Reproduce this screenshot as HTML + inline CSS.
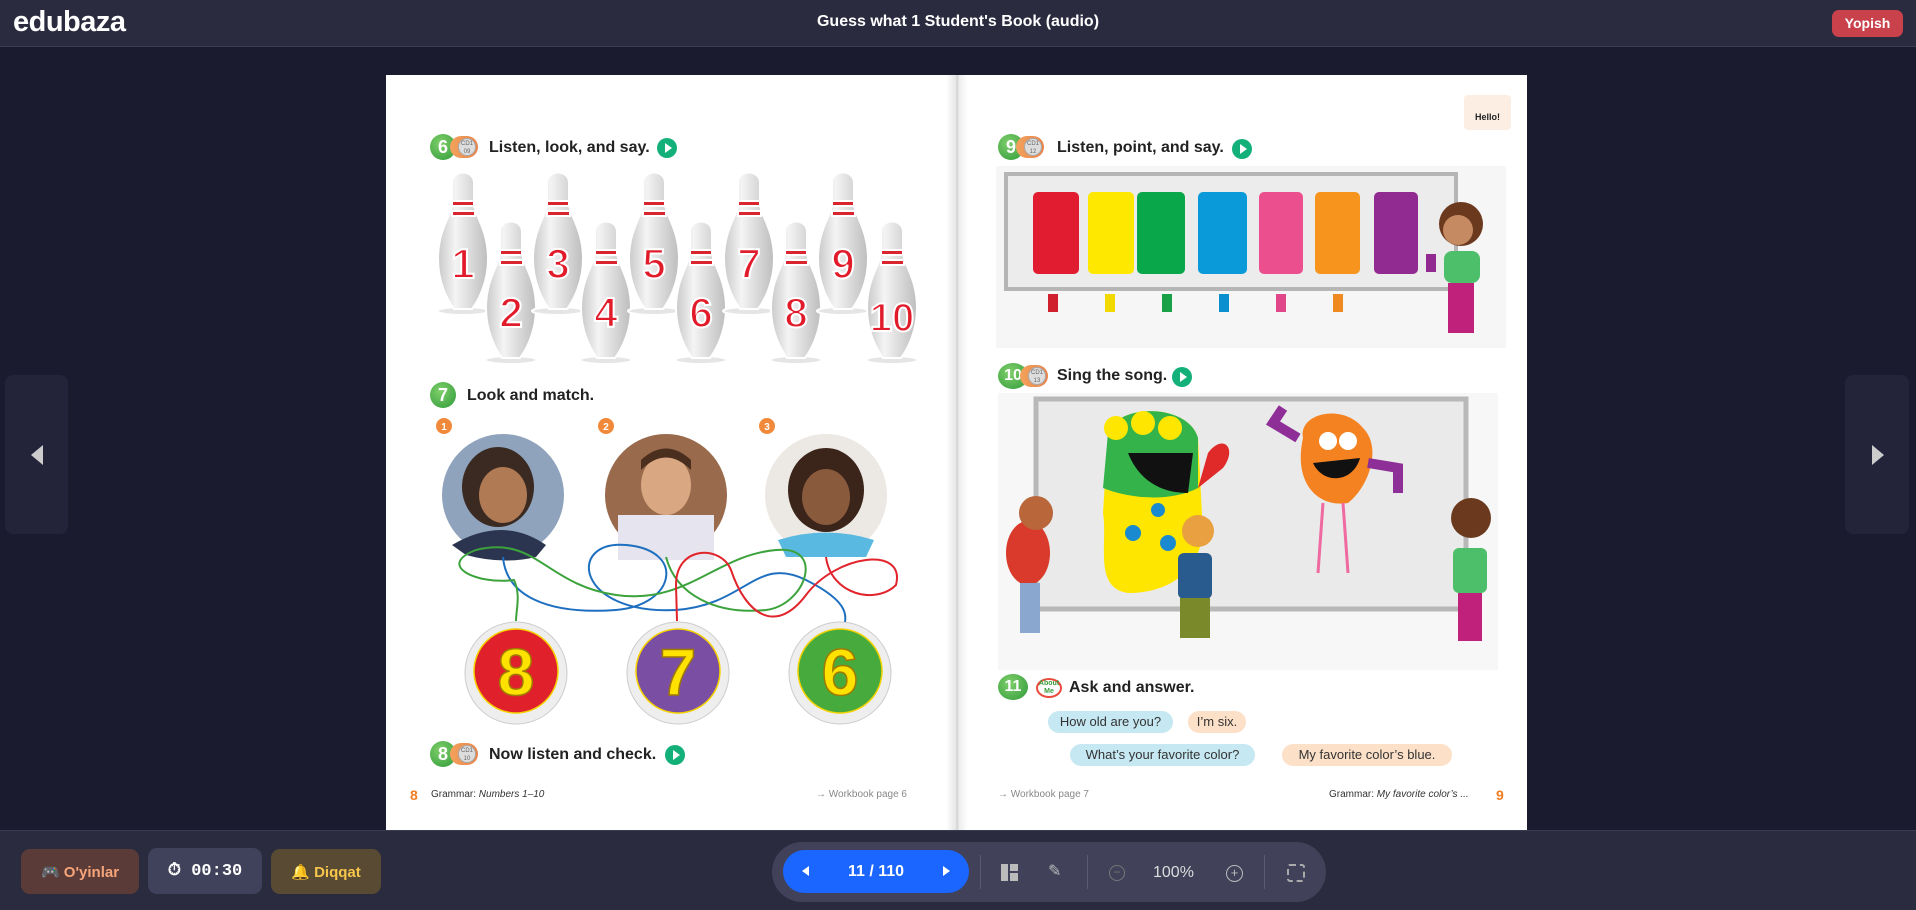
<!DOCTYPE html>
<html><head><meta charset="utf-8"><style>
*{margin:0;padding:0;box-sizing:border-box}
body{width:1916px;height:910px;overflow:hidden;background:#1b1b2f;font-family:"Liberation Sans",sans-serif;position:relative}
.abs{position:absolute}
#hdr{left:0;top:0;width:1916px;height:47px;background:#2a2b3f;border-bottom:1px solid #3b3c52}
#ftr{left:0;top:830px;width:1916px;height:80px;background:#2a2b3f;border-top:1px solid #3b3c52}
.book{left:386px;top:75px;width:1141px;height:755px;background:#fff}
.h{position:absolute;font-weight:bold;font-size:16px;color:#222;white-space:nowrap}
.badge{position:absolute;width:26px;height:26px;border-radius:50%;background:radial-gradient(circle at 40% 35%,#7fcf6a,#2f9a3a);color:#fff;font-weight:bold;font-size:18px;text-align:center;line-height:26px}
.cd{position:absolute;width:28px;height:22px;border-radius:11px;background:linear-gradient(90deg,#f3a35d,#e8834a)}
.cd i{position:absolute;right:2px;top:2px;width:18px;height:18px;border-radius:50%;background:#ddd;border:1px solid #aaa;font-size:6px;color:#666;font-style:normal;text-align:center;line-height:8px;padding-top:1px}
.play{position:absolute;width:20px;height:20px;border-radius:50%;background:#13b07a}
.play:after{content:"";position:absolute;left:8px;top:5px;border-left:7px solid #fff;border-top:5px solid transparent;border-bottom:5px solid transparent}
.btn{position:absolute;border-radius:9px;font-size:15px;font-weight:bold;display:flex;align-items:center;justify-content:center;gap:8px}
.bub{position:absolute;height:22px;border-radius:11px;font-size:13px;color:#333;line-height:22px;text-align:center}
</style></head><body>
<div id="hdr" class="abs">
 <div class="abs" style="left:13px;top:6px;color:#fff;font-size:29px;font-weight:bold;letter-spacing:-0.5px">edubaza</div>
 <div class="abs" style="left:0;width:1916px;top:13px;text-align:center;color:#fff;font-size:16px;font-weight:bold">Guess what 1 Student's Book (audio)</div>
 <div class="abs" style="left:1832px;top:10px;width:71px;height:27px;background:#c9414a;border-radius:7px;color:#fff;font-size:14px;font-weight:bold;text-align:center;line-height:27px">Yopish</div>
</div>

<div class="abs" style="left:5px;top:375px;width:63px;height:159px;background:#23243a;border-radius:8px"><div class="abs" style="left:26px;top:70px;border-right:12px solid #ccc;border-top:10px solid transparent;border-bottom:10px solid transparent"></div></div>
<div class="abs" style="left:1845px;top:375px;width:64px;height:159px;background:#23243a;border-radius:8px"><div class="abs" style="left:27px;top:70px;border-left:12px solid #ccc;border-top:10px solid transparent;border-bottom:10px solid transparent"></div></div>

<div class="abs book">
 <div class="abs" style="left:560px;top:0;width:22px;height:755px;background:linear-gradient(90deg,#fff,#e6e6e6 45%,#cfcfcf 50%,#eee 60%,#fff)"></div>
 <!-- LEFT PAGE (coords relative to book) -->
 <div class="badge" style="left:44px;top:59px">6</div><div class="cd" style="left:64px;top:61px"><i>CD1<br>09</i></div>
 <div class="h" style="left:103px;top:64px">Listen, look, and say.</div><div class="play" style="left:271px;top:63px"></div>
 <svg class="abs" style="left:0;top:0" width="570" height="755">
  <defs><linearGradient id="pg" x1="0" x2="1"><stop offset="0" stop-color="#c9c9c9"/><stop offset=".35" stop-color="#f4f4f4"/><stop offset="1" stop-color="#bdbdbd"/></linearGradient>
  <g id="pin"><ellipse cx="0" cy="140" rx="26" ry="4" fill="#e5e5e5"/><path d="M-11,12 C-11,-2 11,-2 11,12 L11,32 C11,44 25,58 25,88 C25,112 15,130 9,138 L-9,138 C-15,130 -25,112 -25,88 C-25,58 -11,44 -11,32 Z" fill="url(#pg)"/><rect x="-11" y="30" width="22" height="5" fill="#d9262e"/><rect x="-11" y="40" width="23" height="5" fill="#d9262e"/></g></defs>
  <g font-family="Liberation Sans" font-weight="bold" font-size="42" fill="#e11b2a" stroke="#fff" stroke-width="2" text-anchor="middle">
   <use href="#pin" x="77" y="96"/><text x="77" y="203">1</text>
   <use href="#pin" x="125" y="145"/><text x="125" y="252">2</text>
   <use href="#pin" x="172" y="96"/><text x="172" y="203">3</text>
   <use href="#pin" x="220" y="145"/><text x="220" y="252">4</text>
   <use href="#pin" x="268" y="96"/><text x="268" y="203">5</text>
   <use href="#pin" x="315" y="145"/><text x="315" y="252">6</text>
   <use href="#pin" x="363" y="96"/><text x="363" y="203">7</text>
   <use href="#pin" x="410" y="145"/><text x="410" y="252">8</text>
   <use href="#pin" x="457" y="96"/><text x="457" y="203">9</text>
   <use href="#pin" x="506" y="145"/><text x="506" y="256" font-size="40">10</text>
  </g>
  <!-- photos -->
  <circle cx="117" cy="420" r="61" fill="#8fa3bd"/><ellipse cx="112" cy="412" rx="36" ry="40" fill="#3a2a22"/><ellipse cx="117" cy="420" rx="24" ry="28" fill="#b07a55"/><path d="M66,470 Q117,440 160,470 L150,482 Q117,490 80,480Z" fill="#2c3550"/>
  <circle cx="280" cy="420" r="61" fill="#9a6a4c"/><rect x="232" y="440" width="96" height="45" fill="#e6e4ee"/><ellipse cx="280" cy="410" rx="25" ry="30" fill="#d9a882"/><path d="M255,395 Q280,370 305,395 L305,385 Q280,362 255,385Z" fill="#4a2e1e"/>
  <circle cx="440" cy="420" r="61" fill="#ece8e3"/><ellipse cx="440" cy="415" rx="38" ry="42" fill="#3b241a"/><ellipse cx="440" cy="422" rx="24" ry="28" fill="#8a5a3c"/><path d="M392,465 Q440,450 488,465 L480,482 L400,482Z" fill="#5ab9e0"/>
  <g fill="#f08a3a"><circle cx="58" cy="351" r="8"/><circle cx="220" cy="351" r="8"/><circle cx="381" cy="351" r="8"/></g>
  <g fill="#fff" font-size="10" font-weight="bold" font-family="Liberation Sans" text-anchor="middle"><text x="58" y="355">1</text><text x="220" y="355">2</text><text x="381" y="355">3</text></g>
  <!-- curves -->
  <g fill="none" stroke-width="2">
   <path d="M117,482 C120,520 160,540 230,535 C290,530 300,475 240,470 C180,465 190,540 290,535 C360,530 370,480 420,505 C470,530 460,545 455,560" stroke="#1e6fc0"/>
   <path d="M280,482 C290,520 330,540 380,535 C420,530 440,470 390,475 C330,480 300,530 230,520 C160,510 150,460 90,475 C50,490 90,510 128,505 C135,520 130,535 130,546" stroke="#3ca33c"/>
   <path d="M440,482 C445,520 490,530 510,510 C520,470 450,480 420,520 C390,560 360,540 345,495 C335,470 290,470 290,510 L291,546" stroke="#e1242b"/>
  </g>
  <!-- number circles -->
  <g font-family="Liberation Sans" font-weight="bold" font-size="66" fill="#ffe200" stroke="#a07a00" stroke-width="1.5" text-anchor="middle">
   <circle cx="130" cy="598" r="51" fill="#eee" stroke="#ccc" stroke-width="1"/><circle cx="130" cy="596" r="42" fill="#e0212b" stroke="#f5d200" stroke-width="1.5"/><text x="130" y="620">8</text>
   <circle cx="292" cy="598" r="51" fill="#eee" stroke="#ccc" stroke-width="1"/><circle cx="292" cy="596" r="42" fill="#7a4ea2" stroke="#f5d200" stroke-width="1.5"/><text x="292" y="620">7</text>
   <circle cx="454" cy="598" r="51" fill="#eee" stroke="#ccc" stroke-width="1"/><circle cx="454" cy="596" r="42" fill="#46ab3c" stroke="#f5d200" stroke-width="1.5"/><text x="454" y="620">6</text>
  </g>
 </svg>
 <div class="badge" style="left:44px;top:307px">7</div>
 <div class="h" style="left:81px;top:312px">Look and match.</div>
 <div class="badge" style="left:44px;top:666px">8</div><div class="cd" style="left:64px;top:668px"><i>CD1<br>10</i></div>
 <div class="h" style="left:103px;top:671px">Now listen and check.</div><div class="play" style="left:279px;top:670px"></div>
 <div class="abs" style="left:24px;top:712px;color:#f07d22;font-weight:bold;font-size:14px">8</div>
 <div class="abs" style="left:45px;top:714px;font-size:10px;color:#333">Grammar: <i>Numbers 1–10</i></div>
 <div class="abs" style="left:430px;top:714px;font-size:10px;color:#888">→ Workbook page 6</div>

 <!-- RIGHT PAGE -->
 <div class="abs" style="left:1078px;top:20px;width:47px;height:35px;background:#fdeee4;border-radius:4px;font-size:9px;font-weight:bold;color:#222;text-align:center;line-height:44px">Hello!</div>
 <div class="badge" style="left:612px;top:59px">9</div><div class="cd" style="left:630px;top:61px"><i>CD1<br>12</i></div>
 <div class="h" style="left:671px;top:64px">Listen, point, and say.</div><div class="play" style="left:846px;top:64px"></div>
 <svg class="abs" style="left:610px;top:91px" width="510" height="182">
  <rect width="510" height="182" fill="#f6f6f6"/>
  <rect x="10" y="8" width="450" height="115" fill="#ececec" stroke="#b5b5b5" stroke-width="4"/>
  <g><rect x="37" y="26" width="46" height="82" rx="5" fill="#e11b30"/><rect x="92" y="26" width="46" height="82" rx="5" fill="#ffe800"/><rect x="141" y="26" width="48" height="82" rx="5" fill="#0aa64a"/><rect x="202" y="26" width="49" height="82" rx="5" fill="#0a9ad9"/><rect x="263" y="26" width="44" height="82" rx="5" fill="#ec4f8e"/><rect x="319" y="26" width="45" height="82" rx="5" fill="#f7941d"/><rect x="378" y="26" width="44" height="82" rx="5" fill="#922b91"/></g>
  <g><rect x="52" y="128" width="10" height="18" fill="#d0202e"/><rect x="109" y="128" width="10" height="18" fill="#f0d800"/><rect x="166" y="128" width="10" height="18" fill="#19a147"/><rect x="223" y="128" width="10" height="18" fill="#0a90cf"/><rect x="280" y="128" width="10" height="18" fill="#e0488a"/><rect x="337" y="128" width="10" height="18" fill="#ee8a1f"/></g>
  <circle cx="465" cy="58" r="22" fill="#6b3a1e"/><circle cx="462" cy="64" r="15" fill="#c68a62"/><rect x="448" y="85" width="36" height="32" rx="8" fill="#4dbf6a"/><rect x="452" y="117" width="26" height="50" fill="#c0217a"/><rect x="430" y="88" width="10" height="18" fill="#922b91"/>
 </svg>
 <div class="badge" style="left:612px;top:288px;font-size:16px;width:30px">10</div><div class="cd" style="left:634px;top:290px"><i>CD1<br>13</i></div>
 <div class="h" style="left:671px;top:292px">Sing the song.</div><div class="play" style="left:786px;top:292px"></div>
 <svg class="abs" style="left:612px;top:318px" width="500" height="277">
  <rect width="500" height="277" fill="#f7f7f7"/>
  <rect x="38" y="6" width="430" height="210" fill="#eaeaea" stroke="#b8b8b8" stroke-width="5"/>
  <path d="M110,40 C120,10 190,10 200,45 L205,140 C200,180 170,200 130,200 C95,195 110,150 105,120Z" fill="#ffe600"/>
  <path d="M110,40 C120,10 190,10 200,45 L200,95 C170,110 130,105 105,95Z" fill="#33b34a"/>
  <circle cx="118" cy="35" r="12" fill="#ffe600"/><circle cx="145" cy="30" r="12" fill="#ffe600"/><circle cx="172" cy="35" r="12" fill="#ffe600"/>
  <path d="M130,60 L195,60 L190,100 C160,100 140,85 130,60Z" fill="#111"/>
  <circle cx="160" cy="117" r="7" fill="#1a8ad0"/><circle cx="135" cy="140" r="8" fill="#1a8ad0"/><circle cx="170" cy="150" r="8" fill="#1a8ad0"/>
  <path d="M210,60 C225,40 240,55 225,75 L200,95Z" fill="#e02a2a"/>
  <path d="M305,45 C300,20 345,10 365,35 C385,55 370,95 350,110 C320,115 295,90 305,45Z" fill="#f58220"/>
  <circle cx="330" cy="48" r="9" fill="#fff"/><circle cx="350" cy="48" r="9" fill="#fff"/><path d="M315,70 L362,65 C355,90 325,92 315,70Z" fill="#111"/>
  <path d="M300,45 L275,30 L285,15" stroke="#8e2f98" stroke-width="10" fill="none"/><path d="M370,70 L400,75 L400,100" stroke="#8e2f98" stroke-width="10" fill="none"/>
  <path d="M325,110 L320,180 M345,110 L350,180" stroke="#ef6aa0" stroke-width="3"/>
  <ellipse cx="30" cy="160" rx="22" ry="32" fill="#d93a2b"/><circle cx="38" cy="120" r="17" fill="#b8663a"/><rect x="22" y="190" width="20" height="50" fill="#8aa7d0"/>
  <rect x="180" y="160" width="34" height="46" rx="6" fill="#2a5b8e"/><circle cx="200" cy="138" r="16" fill="#e8a040"/><rect x="182" y="205" width="30" height="40" fill="#7a8a2a"/>
  <rect x="455" y="155" width="34" height="45" rx="6" fill="#4dbf6a"/><circle cx="473" cy="125" r="20" fill="#6b3a1e"/><rect x="460" y="200" width="24" height="48" fill="#c0217a"/>
 </svg>
 <div class="badge" style="left:612px;top:599px;font-size:16px;width:30px">11</div>
 <div class="abs" style="left:650px;top:603px;width:26px;height:20px;border-radius:50%;border:2px solid #e94b3c;font-size:7px;color:#3a9a3a;font-weight:bold;text-align:center;line-height:8px">About<br>Me</div>
 <div class="h" style="left:683px;top:604px">Ask and answer.</div>
 <div class="bub" style="left:662px;top:636px;width:125px;background:#c6e8f2">How old are you?</div>
 <div class="bub" style="left:802px;top:636px;width:58px;background:#fde0c8">I’m six.</div>
 <div class="bub" style="left:684px;top:669px;width:185px;background:#c6e8f2">What’s your favorite color?</div>
 <div class="bub" style="left:896px;top:669px;width:170px;background:#fde0c8">My favorite color’s blue.</div>
 <div class="abs" style="left:612px;top:714px;font-size:10px;color:#888">→ Workbook page 7</div>
 <div class="abs" style="left:943px;top:714px;font-size:10px;color:#333">Grammar: <i>My favorite color’s ...</i></div>
 <div class="abs" style="left:1110px;top:712px;color:#f07d22;font-weight:bold;font-size:14px">9</div>
</div>

<div id="ftr" class="abs">
 <div class="btn" style="left:21px;top:18px;width:118px;height:45px;background:#5b3b37;color:#f6a57a">🎮 O'yinlar</div>
 <div class="btn" style="left:148px;top:17px;width:114px;height:46px;background:#40415a;color:#fff;font-family:'Liberation Mono',monospace;font-size:17px">⏱ 00:30</div>
 <div class="btn" style="left:271px;top:18px;width:110px;height:45px;background:#584a33;color:#f8c64a">🔔 Diqqat</div>
 <div class="abs" style="left:772px;top:11px;width:554px;height:60px;background:#41415a;border-radius:30px"></div>
 <div class="abs" style="left:783px;top:19px;width:186px;height:43px;background:#1a66ff;border-radius:22px;color:#fff;font-size:16px;font-weight:bold;text-align:center;line-height:43px">11 / 110
  <div class="abs" style="left:19px;top:16px;border-right:7px solid #fff;border-top:5px solid transparent;border-bottom:5px solid transparent"></div>
  <div class="abs" style="left:160px;top:16px;border-left:7px solid #fff;border-top:5px solid transparent;border-bottom:5px solid transparent"></div>
 </div>
 <div class="abs" style="left:980px;top:24px;width:1px;height:34px;background:#5a5b72"></div>
 <div class="abs" style="left:1001px;top:33px;width:7px;height:17px;background:#bbb"></div><div class="abs" style="left:1010px;top:33px;width:8px;height:7px;background:#bbb"></div><div class="abs" style="left:1010px;top:42px;width:8px;height:8px;background:#bbb"></div>
 <div class="abs" style="left:1048px;top:30px;color:#bbb;font-size:16px">✎</div>
 <div class="abs" style="left:1087px;top:24px;width:1px;height:34px;background:#5a5b72"></div>
 <div class="abs" style="left:1109px;top:34px;width:16px;height:16px;border:1.5px solid #777;border-radius:50%;color:#777;font-size:12px;line-height:12px;text-align:center">−</div>
 <div class="abs" style="left:1153px;top:33px;color:#ddd;font-size:16px">100%</div>
 <div class="abs" style="left:1226px;top:34px;width:17px;height:17px;border:1.5px solid #bbb;border-radius:50%;color:#bbb;font-size:13px;line-height:13px;text-align:center">+</div>
 <div class="abs" style="left:1264px;top:24px;width:1px;height:34px;background:#5a5b72"></div>
 <div class="abs" style="left:1287px;top:33px;width:18px;height:18px;border:2px dashed #aaa;border-radius:3px"></div>
</div>
</body></html>
